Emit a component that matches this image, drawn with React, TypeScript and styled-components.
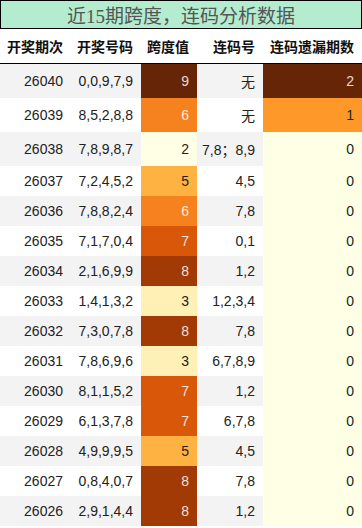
import styled, { createGlobalStyle } from 'styled-components'

const GlobalStyle = createGlobalStyle`
  body {
    margin: 0;
    background: #fff;
  }
`

const rows = [
  ['26040', '0,0,9,7,9', 9, '无', 2],
  ['26039', '8,5,2,8,8', 6, '无', 1],
  ['26038', '7,8,9,8,7', 2, '7,8；8,9', 0],
  ['26037', '7,2,4,5,2', 5, '4,5', 0],
  ['26036', '7,8,8,2,4', 6, '7,8', 0],
  ['26035', '7,1,7,0,4', 7, '0,1', 0],
  ['26034', '2,1,6,9,9', 8, '1,2', 0],
  ['26033', '1,4,1,3,2', 3, '1,2,3,4', 0],
  ['26032', '7,3,0,7,8', 8, '7,8', 0],
  ['26031', '7,8,6,9,6', 3, '6,7,8,9', 0],
  ['26030', '8,1,1,5,2', 7, '1,2', 0],
  ['26029', '6,1,3,7,8', 7, '6,7,8', 0],
  ['26028', '4,9,9,9,5', 5, '4,5', 0],
  ['26027', '0,8,4,0,7', 8, '7,8', 0],
  ['26026', '2,9,1,4,4', 8, '1,2', 0],
] as const

const spanColors: Record<number, string> = {
  0: '#ffffe5',
  1: '#fff7bc',
  2: '#ffffe5',
  3: '#fff1b5',
  4: '#fec44f',
  5: '#feb241',
  6: '#f5821f',
  7: '#d85708',
  8: '#a13a05',
  9: '#662506',
}

const missColors: Record<number, string> = {
  0: '#ffffe5',
  1: '#fe9929',
  2: '#662506',
}

const Wrap = styled.div`
  width: 362px;
  font-family: "Liberation Sans", "Noto Sans CJK SC", sans-serif;
`

const Title = styled.div`
  border: 1px solid #000;
  background: #b3ecce;
  color: #555;
  font-family: "Liberation Serif", "Noto Sans CJK SC", serif;
  font-size: 19px;
  text-align: center;
`

const Table = styled.table`
  width: 362px;
  border-collapse: collapse;
  table-layout: fixed;
  font-size: 14px;
`

const Th = styled.th`
  padding: 7px 8px 7px 0;
  text-align: right;
  font-weight: bold;
  color: #111;
  background: #fff;
  border-bottom: 1px solid #000;
  white-space: nowrap;
`

const Row = styled.tr<{ $odd: boolean }>`
  background: ${p => (p.$odd ? '#f3f3f3' : '#fff')};
`

const Td = styled.td`
  padding: 7px 8px 7px 0;
  text-align: right;
  color: #222;
  white-space: nowrap;
`

const HeatTd = styled(Td)<{ $bg: string; $light: boolean }>`
  background: ${p => p.$bg};
  color: ${p => (p.$light ? 'rgba(255, 255, 255, 0.85)' : '#222')};
`

export default function App() {
  return (
    <Wrap>
      <GlobalStyle />
      <Title>近15期跨度，连码分析数据</Title>
      <Table>
        <colgroup>
          <col style={{ width: 71 }} />
          <col style={{ width: 70 }} />
          <col style={{ width: 56 }} />
          <col style={{ width: 66 }} />
          <col style={{ width: 99 }} />
        </colgroup>
        <thead>
          <tr>
            <Th>开奖期次</Th>
            <Th>开奖号码</Th>
            <Th>跨度值</Th>
            <Th>连码号</Th>
            <Th>连码遗漏期数</Th>
          </tr>
        </thead>
        <tbody>
          {rows.map(([issue, nums, span, lian, miss], i) => (
            <Row key={issue} $odd={i % 2 === 0}>
              <Td>{issue}</Td>
              <Td>{nums}</Td>
              <HeatTd $bg={spanColors[span]} $light={span >= 6}>{span}</HeatTd>
              <Td>{lian}</Td>
              <HeatTd $bg={missColors[miss]} $light={miss >= 2}>{miss}</HeatTd>
            </Row>
          ))}
        </tbody>
      </Table>
    </Wrap>
  )
}
